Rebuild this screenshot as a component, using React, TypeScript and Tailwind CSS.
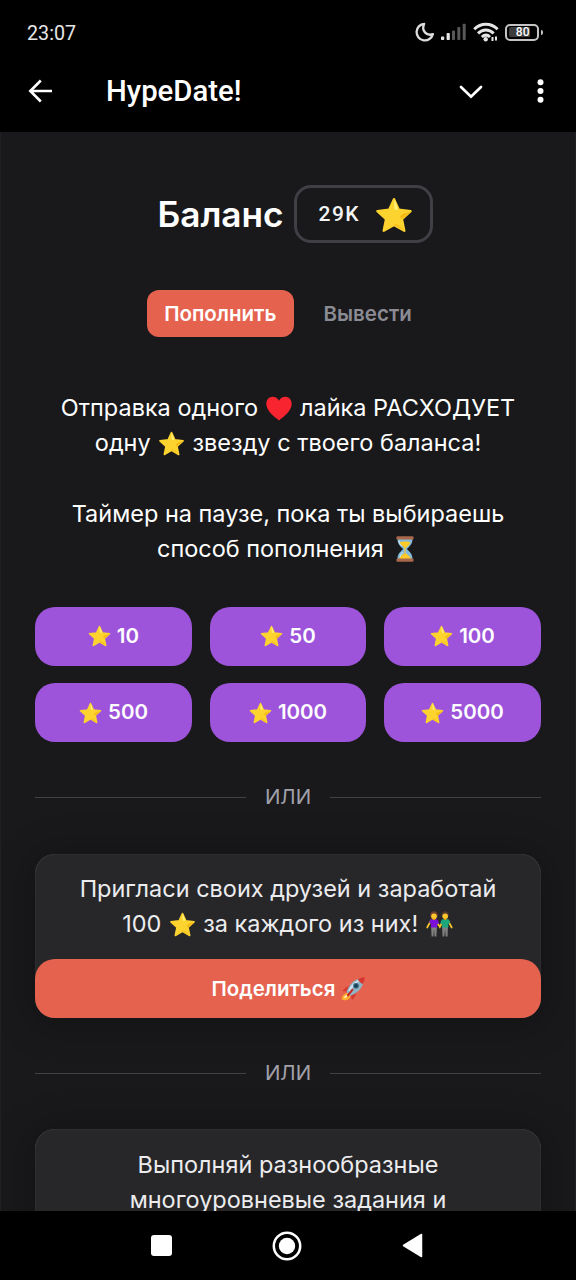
import type { ReactNode } from "react";

const AMOUNTS = [10, 50, 100, 500, 1000, 5000];

function Star({ className }: { className: string }) {
  return (
    <svg viewBox="1 1 38 36" className={className}>
      <path
        d="M20 3.200l4.800 10.600 11.800 1.300-8.700 8 2.400 11.600L20 28.900 9.700 34.700l2.400-11.600-8.700-8 11.800-1.300z"
        fill="#fdd32f"
        stroke="#fdd32f"
        strokeWidth="2.400"
        strokeLinejoin="round"
      />
      <path
        d="M20.300 3.500c1 2.500 3 6.500 3.300 9.200.1 1.700-2.500 2-3 .3-.5-2.500-.6-7-.3-9.500z"
        fill="#fff27a"
      />
      <path
        d="M36.800 15.800l-8.300 7c-1 .3-3-1.500-2.300-2.600 1.800-2.200 6.200-3.800 10.600-4.400z"
        fill="#f7b916"
      />
      <path
        d="M30.300 35L20.500 29.300c-.8-.6-.1-1.600 1-1.500 3.300.6 6.500 3.500 8.800 7.200z"
        fill="#f9c320"
      />
    </svg>
  );
}

function InlineStar() {
  return (
    <Star className="mx-[0.800px] inline-block h-[25px] w-[27px] align-[-5px]" />
  );
}

function Heart() {
  return (
    <svg
      viewBox="0 0 26 25"
      className="mx-[1.400px] inline-block h-[25px] w-[26px] align-[-5px]"
    >
      <path
        d="M13 24.500C9 21 .3 15.500.3 7.800.3 3.600 3.100.8 6.700.8c2.700 0 5 1.500 6.300 4 1.300-2.500 3.600-4 6.300-4 3.600 0 6.400 2.800 6.400 7 0 7.700-8.700 13.200-12.700 16.700z"
        fill="#f8242f"
      />
    </svg>
  );
}

function Hourglass() {
  return (
    <svg
      viewBox="0 0 18 26"
      className="mx-[5.300px] inline-block h-[26px] w-[18px] align-[-5px]"
    >
      <path
        d="M1.500 3h15c0 5-2.500 7-5.700 10 3.200 3 5.700 5 5.700 10h-15c0-5 2.500-7 5.700-10C4 10 1.500 8 1.500 3z"
        fill="#84b9d8"
      />
      <path d="M3.500 6.500c3-1.300 8-1.300 11 0-1 2.500-3.500 4.200-5 6-1.600-1.800-5-3.500-6-6z" fill="#ffca28" />
      <path d="M8.500 12h1v5.500c2 1 4.500 2.500 5.500 5.500H3c1-3 3.500-4.500 5.500-5.500z" fill="#ffca28" />
      <path d="M3 4.500c0 2.500 1 4 2.500 5.500M4 21c.4-2 1.500-3.500 3-5" stroke="#d5eefa" strokeWidth="1" fill="none" />
      <rect x=".4" y=".3" width="17.200" height="3.200" rx="1.300" fill="#a9684b" />
      <rect x=".4" y="22.500" width="17.200" height="3.200" rx="1.300" fill="#a9684b" />
    </svg>
  );
}

function Couple() {
  return (
    <svg
      viewBox="0 0 27 26"
      className="mx-[1px] inline-block h-[26px] w-[27px] align-[-5px]"
    >
      <path d="M5 14.500h6l-.6 11H8.500L8 18l-.6 7.500H5.600zM16 14.500h6l-.5 11h-1.800L19 18l-.6 7.500h-1.800z" fill="#808080" />
      <path d="M5 9.500L1.200 16.500M10.500 10.500l3.300 5.500 3-5.500M22 9.500l3.700 7" stroke="#fdc62c" strokeWidth="1.700" strokeLinecap="round" fill="none" />
      <path d="M5.500 8.200h5c1.500 0 2.200 2.500 2.500 4.300l-2 .8.200 3.200H4.800l.4-3.700-2-.7c.5-1.800 1-3.900 2.300-3.900z" fill="#7b10d8" />
      <path d="M16.700 8.200h5c1.300 0 2 2.100 2.500 3.900l-2 .8.200 3.600h-6.600l.6-3.200-2-.8c.3-1.800.9-4.300 2.300-4.300z" fill="#1aa87c" />
      <path d="M4.200 4.600C4.200 1.700 5.800.3 8 .3s3.800 1.400 3.800 4.300L11 6.500H5z" fill="#6d4030" />
      <path d="M15.600 4.200c0-2.500 1.400-3.900 3.600-3.900s3.600 1.400 3.600 3.900L22 5.800h-5.600z" fill="#543930" />
      <circle cx="8" cy="5.400" r="2.800" fill="#fdc62c" />
      <circle cx="19.200" cy="5.300" r="2.800" fill="#fdc62c" />
      <path d="M7 7.500h2v1.600H7zM18.200 7.500h2v1.600h-2z" fill="#e59600" />
    </svg>
  );
}

function Rocket() {
  return (
    <svg
      viewBox="0 0 24 24"
      className="inline-block h-[24px] w-[24px] align-[-5px]"
    >
      <path d="M7.500 16c-3.500 0-6.500 2.500-7 6.500 1.500-.3 2 .7 4 .8 3-.3 5-2.800 5-5.300z" fill="#ffb02c" />
      <path d="M6.800 17.500c-2 .3-3.500 1.800-4 3.800 2-.4 3.900-1.500 4.400-3z" fill="#fff3c0" />
      <path d="M10.500 8.500C7 8.500 3.500 11 1.500 14l6 .8zM15.500 13.500c0 4-1.800 7-4.500 9.500l-1.300-5.500z" fill="#d7372f" />
      <path d="M5.500 15C7.500 8.500 12.500 3 19 1.300l3.700 3.700c-1.300 6-6.700 11.500-13.200 13.800z" fill="#90b4c5" />
      <path d="M7.500 13.500C9.500 8 14.500 4 18.500 2.300l1 1.200C15 6 11.500 9.500 9 15z" fill="#c9e2ee" />
      <path d="M16.800 2.300C19 .8 22 .3 23.700.3c0 1.700-.5 4.700-2 6.900-1.700-.8-4.200-3-4.900-4.900z" fill="#d7372f" />
      <circle cx="15" cy="8.800" r="2.800" fill="#37617a" />
      <circle cx="15" cy="8.800" r="1.600" fill="#163c52" />
      <path d="M11.500 12.700L6.800 18.500" stroke="#c62828" strokeWidth="2" strokeLinecap="round" />
    </svg>
  );
}

function StatusBar() {
  return (
    <div className="flex h-16 items-center justify-between pr-[33px] pl-[27px]">
      <span className="pt-[3px] font-['Roboto',sans-serif] text-[19.700px] text-[#e6e6e6]">
        23:07
      </span>
      <div className="flex items-center">
        <svg viewBox="0 0 20 20" className="mr-[6px] h-5 w-5" fill="none">
          <path
            d="M9.200 1.800A8.300 8.300 0 1 0 17.900 12.200C11.500 14.500 6 8.500 9.200 1.800z"
            stroke="#dcdcdc"
            strokeWidth="2.300"
            strokeLinejoin="round"
          />
        </svg>
        <svg viewBox="0 0 25 18" className="mr-[7px] h-[18px] w-[25px]">
          <rect x="0" y="13.500" width="3.200" height="3.500" rx=".8" fill="#e6e6e6" />
          <rect x="5.600" y="10" width="3.200" height="7" rx=".8" fill="#e6e6e6" />
          <rect x="11" y="7.500" width="3" height="9.500" rx=".8" fill="#585858" />
          <rect x="16.300" y="4" width="3" height="13" rx=".8" fill="#585858" />
          <rect x="21.700" y=".8" width="3" height="16.200" rx=".8" fill="#585858" />
        </svg>
        <svg viewBox="0 0 26 20" className="mr-[6px] h-5 w-[26px]" fill="none">
          <path
            d="M1.200 7.300C8 .6 17.800.6 24.600 7.300M5 11.300c4.700-4.500 11-4.500 15.700 0M8.800 15c2.600-2.300 5.700-2.300 8.200 0"
            stroke="#e6e6e6"
            strokeWidth="3"
          />
          <circle cx="12.700" cy="17.300" r="2.200" fill="#e6e6e6" />
          <path d="M19.500 19v-4M23 14.500v4" stroke="#e6e6e6" strokeWidth="2" />
        </svg>
        <div className="flex items-center gap-[2px]">
          <div className="flex h-[17px] w-[34px] items-center rounded-[5px] border-2 border-[#c4c4c4] p-[1.500px]">
            <div className="flex h-full w-[21px] items-center justify-end rounded-l-[2px] bg-[#3c3c3c] font-['Roboto',sans-serif] text-[12px] font-medium text-white">
              80
            </div>
          </div>
          <div className="h-[5px] w-[2px] rounded-r bg-[#c4c4c4]" />
        </div>
      </div>
    </div>
  );
}

function AppBar() {
  return (
    <div className="flex h-[68px] items-center pr-[32px] pb-[14px] pl-[28px]">
      <svg viewBox="0 0 26 26" className="h-[26px] w-[26px]" fill="none" stroke="#fff" strokeWidth="2.600">
        <path d="M24 13H3M12.800 2.500L2.300 13l10.500 10.500" />
      </svg>
      <h1 className="ml-[52px] flex-1 pt-px font-['Roboto',sans-serif] text-[29.300px] font-medium text-white">
        HypeDate!
      </h1>
      <svg viewBox="0 0 24 14" className="mt-[2px] mr-[54px] h-[14px] w-6" fill="none">
        <path
          d="M2 2l10 9.700L22 2"
          stroke="#fff"
          strokeWidth="2.700"
          strokeLinecap="round"
        />
      </svg>
      <svg viewBox="0 0 7 24" className="h-6 w-[7px]" fill="#fff">
        <circle cx="3.500" cy="3.300" r="3" />
        <circle cx="3.500" cy="12" r="3" />
        <circle cx="3.500" cy="20.700" r="3" />
      </svg>
    </div>
  );
}

function OrDivider() {
  return (
    <div className="flex h-[30px] items-center gap-[19px] text-[20.500px] text-[#a1a1aa]">
      <div className="h-px flex-1 bg-[#414144]" />
      ИЛИ
      <div className="h-px flex-1 bg-[#414144]" />
    </div>
  );
}

function Card({ children }: { children: ReactNode }) {
  return (
    <div className="rounded-[20px] bg-[#27272a] shadow-[0_3px_36px_8px_rgba(0,0,0,0.2),inset_0_0_1px_rgba(255,255,255,0.35)]">
      {children}
    </div>
  );
}

export default function App() {
  return (
    <div className="flex h-[1280px] w-[576px] flex-col overflow-hidden bg-black font-['Inter',sans-serif]">
      <header className="h-[132px] shrink-0">
        <StatusBar />
        <AppBar />
      </header>

      <main className="min-h-0 flex-1 overflow-hidden border-x border-[#202022] bg-[#19191b] px-[34px] pt-[53px]">
        <div className="flex h-[58px] items-center justify-center gap-[10px] pl-[14px]">
          <h2 className="pt-px text-[35.200px] font-semibold text-white">
            Баланс
          </h2>
          <div className="flex h-[58px] w-[139px] items-center justify-between rounded-[17px] border-[3px] border-[#3f3f46] pr-[17px] pl-[22px]">
            <span className="pt-[2px] font-['Roboto',sans-serif] text-[21px] font-medium tracking-[1.400px] text-[#f4f4f5]">
              29K
            </span>
            <Star className="mt-[2px] h-[36px] w-[38px]" />
          </div>
        </div>

        <div className="mt-[47px] flex h-[47px] justify-center gap-[12px] text-[20.500px] font-semibold">
          <button className="rounded-[12px] bg-[#e5624f] px-[17.600px] pt-px text-white">
            Пополнить
          </button>
          <button className="px-[17.600px] pt-px text-[#8b8b93]">
            Вывести
          </button>
        </div>

        <div className="mt-[53px] text-center text-[23.470px] leading-[35.200px] text-white">
          <p>
            Отправка одного <Heart /> лайка РАСХОДУЕТ
            <br />
            одну <InlineStar /> звезду с твоего баланса!
          </p>
          <p className="mt-[35.200px]">
            Таймер на паузе, пока ты выбираешь
            <br />
            способ пополнения <Hourglass />
          </p>
        </div>

        <div className="mt-[41px] grid grid-cols-3 gap-[17.600px]">
          {AMOUNTS.map((amount) => (
            <button
              key={amount}
              className="flex h-[58.670px] items-center justify-center gap-[6px] rounded-[20px] bg-[#9d54da] text-[20.500px] font-semibold text-white"
            >
              <Star className="h-[22px] w-[23px]" />
              {amount}
            </button>
          ))}
        </div>

        <div className="mt-[40.600px]">
          <OrDivider />
        </div>

        <div className="mt-[41px]">
          <Card>
            <p className="px-[17px] py-[17.600px] text-center text-[23.470px] leading-[35.200px] text-[#ececee]">
              Пригласи своих друзей и заработай
              <br />
              100 <InlineStar /> за каждого из них! <Couple />
            </p>
            <button className="h-[58.670px] w-full rounded-[20px] bg-[#e5624f] pt-px text-[20.500px] font-semibold text-white">
              Поделиться <Rocket />
            </button>
          </Card>
        </div>

        <div className="mt-[40.600px]">
          <OrDivider />
        </div>

        <div className="mt-[41px]">
          <Card>
            <p className="px-[17px] py-[17.600px] text-center text-[23.470px] leading-[35.200px] text-[#ececee]">
              Выполняй разнообразные
              <br />
              многоуровневые задания и
            </p>
          </Card>
        </div>
      </main>

      <nav className="flex h-[69px] shrink-0 items-center justify-between pr-[153px] pl-[151px]">
        <div className="h-[21px] w-[21px] rounded-[3px] bg-white" />
        <svg viewBox="0 0 30 30" className="h-[30px] w-[30px]">
          <circle cx="15" cy="15" r="13.200" fill="none" stroke="#fff" strokeWidth="2.500" />
          <circle cx="15" cy="15" r="8.200" fill="#fff" />
        </svg>
        <svg viewBox="0 0 21 25" className="h-[25px] w-[21px]">
          <path
            d="M19.500 1.500v22L1.500 12.500z"
            fill="#fff"
            stroke="#fff"
            strokeWidth="1.500"
            strokeLinejoin="round"
          />
        </svg>
      </nav>
    </div>
  );
}
